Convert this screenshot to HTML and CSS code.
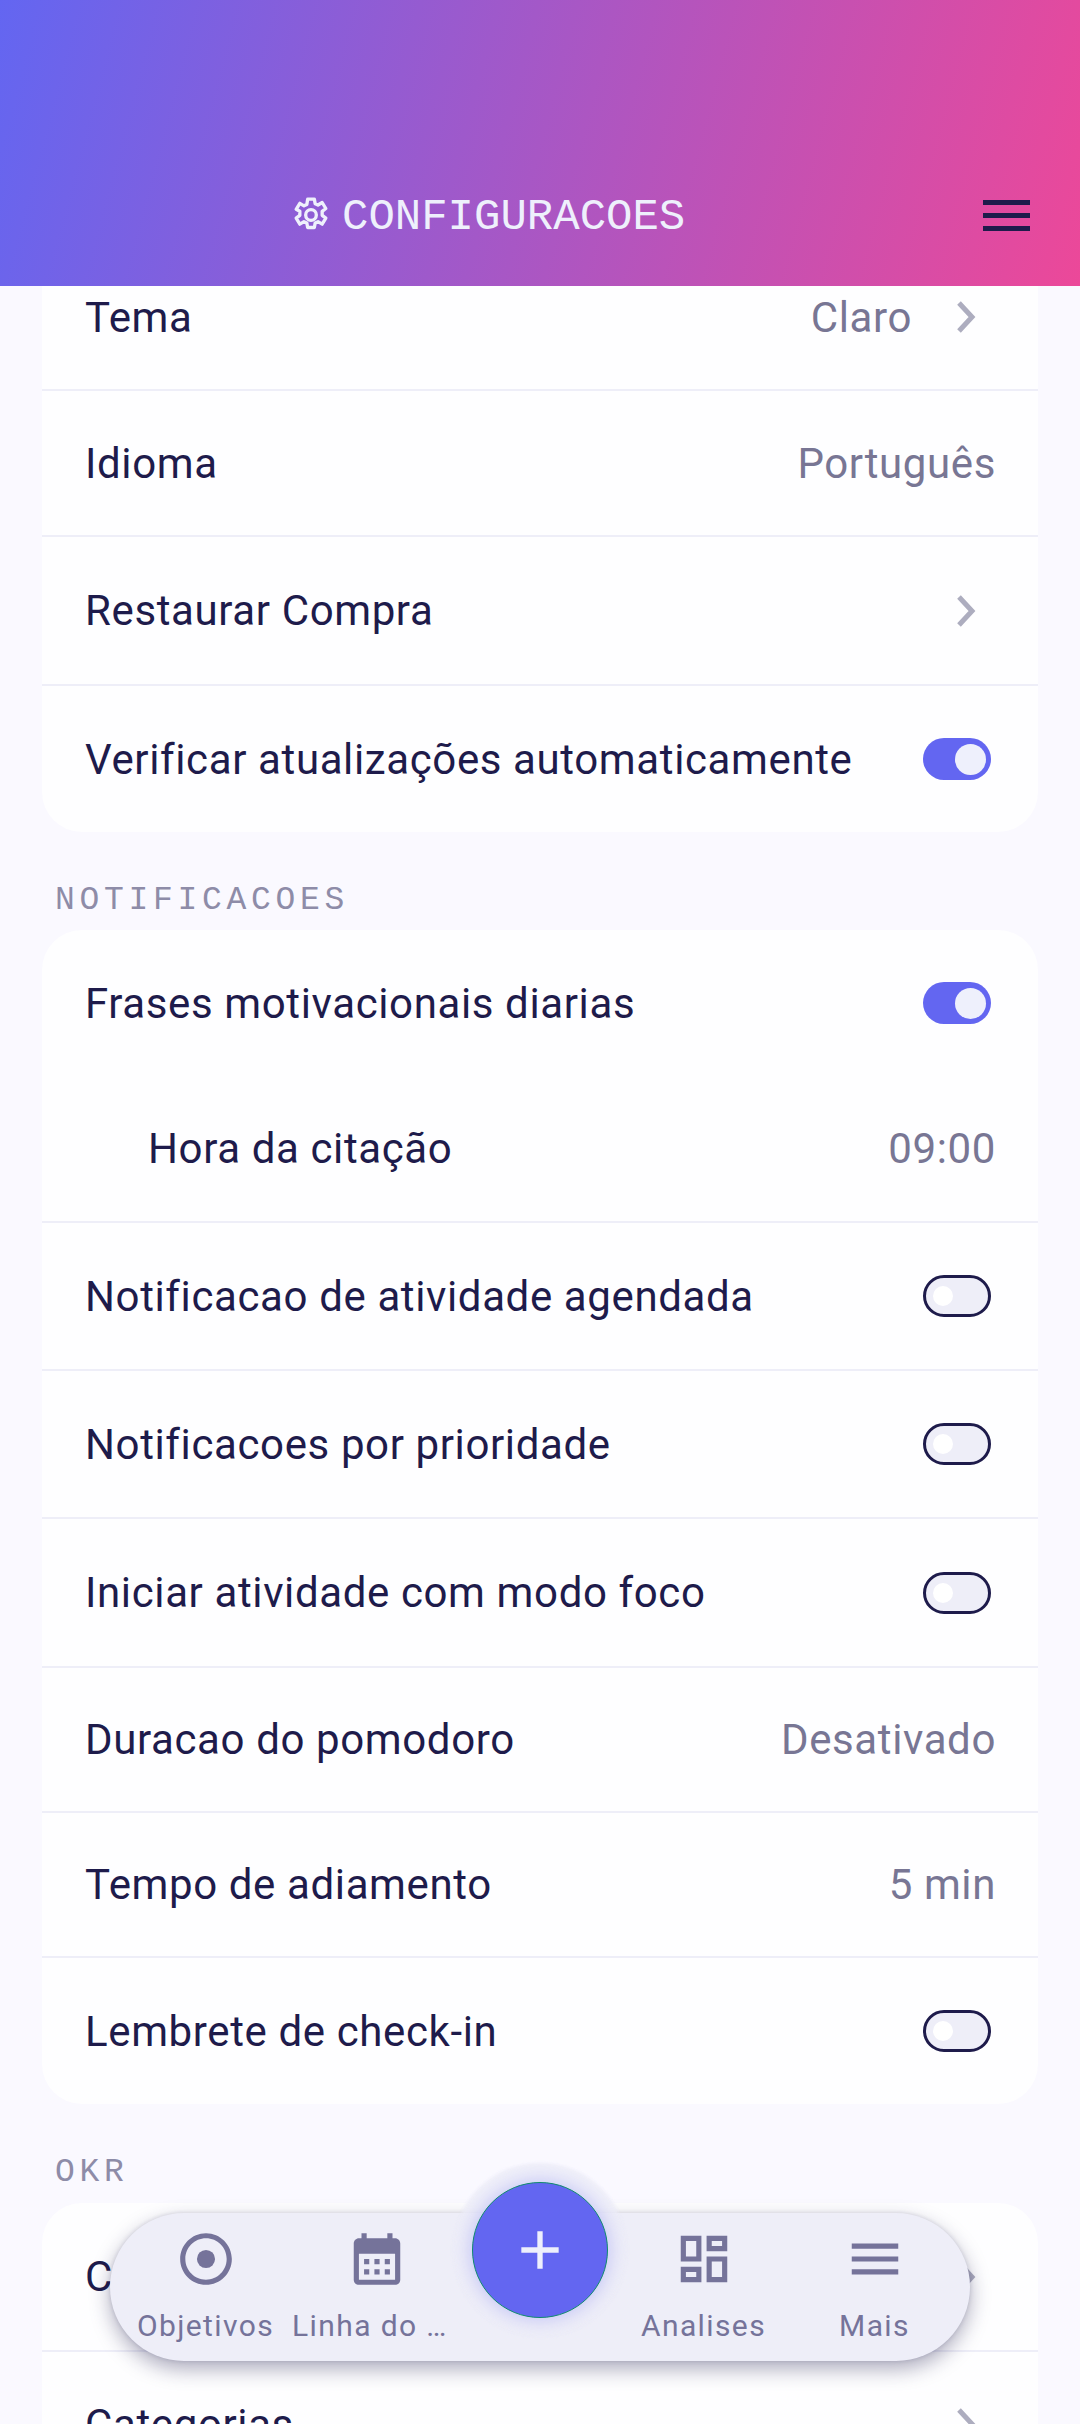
FILE: index.html
```html
<!DOCTYPE html>
<html lang="pt">
<head>
<meta charset="utf-8">
<title>Configuracoes</title>
<link rel="stylesheet" href="styles.css">
</head>
<body>
<div class="app">
  <header class="header">
    <div class="title">
      <svg class="gear" viewBox="0 0 24 24"><path d="M10 2.500h4l.5 2.700 1.700.8 2.500-1.500 2.200 3.600-2.200 1.700v2.400l2.200 1.700-2.200 3.600-2.500-1.500-1.700.8-.5 2.700h-4l-.5-2.700-1.700-.8-2.500 1.500-2.200-3.600 2.200-1.700v-2.400L3.100 8.600l2.200-3.600 2.500 1.500 1.700-.8z"/><circle cx="12" cy="12" r="3.200"/></svg>
      <span>CONFIGURACOES</span>
    </div>
    <div class="burger"><i></i><i></i><i></i></div>
  </header>

  <main class="scroller">
    <div class="content">
      <section class="card">
        <div class="row h146 line"><span>Tema</span><div class="end"><span class="value">Claro</span><svg class="chev" viewBox="0 0 20 32"><path d="M3 2l13 14L3 30"/></svg></div></div>
        <div class="row h146 line"><span>Idioma</span><span class="value">Português</span></div>
        <div class="row h149 line"><span>Restaurar Compra</span><div class="end"><svg class="chev" viewBox="0 0 20 32"><path d="M3 2l13 14L3 30"/></svg></div></div>
        <div class="row h146"><span>Verificar atualizações automaticamente</span><div class="toggle on"><b></b></div></div>
      </section>

      <h2 class="label">NOTIFICACOES</h2>
      <section class="card">
        <div class="row h146"><span>Frases motivacionais diarias</span><div class="toggle on"><b></b></div></div>
        <div class="row h147 line indent"><span>Hora da citação</span><span class="value">09:00</span></div>
        <div class="row h148 line"><span>Notificacao de atividade agendada</span><div class="toggle"><b></b></div></div>
        <div class="row h148 line"><span>Notificacoes por prioridade</span><div class="toggle"><b></b></div></div>
        <div class="row h149 line"><span>Iniciar atividade com modo foco</span><div class="toggle"><b></b></div></div>
        <div class="row h145 line"><span>Duracao do pomodoro</span><span class="value">Desativado</span></div>
        <div class="row h145 line"><span>Tempo de adiamento</span><span class="value">5 min</span></div>
        <div class="row h146"><span>Lembrete de check-in</span><div class="toggle"><b></b></div></div>
      </section>

      <h2 class="label">OKR</h2>
      <section class="card">
        <div class="row h149 line"><span>Ciclos</span><div class="end"><svg class="chev" viewBox="0 0 20 32"><path d="M3 2l13 14L3 30"/></svg></div></div>
        <div class="row h146 line"><span>Categorias</span><div class="end"><svg class="chev" viewBox="0 0 20 32"><path d="M3 2l13 14L3 30"/></svg></div></div>
      </section>
    </div>
  </main>

  <nav class="nav">
    <a class="item">
      <svg viewBox="0 0 24 24"><path d="M12 2C6.480 2 2 6.480 2 12s4.480 10 10 10 10-4.480 10-10S17.520 2 12 2zm0 18c-4.420 0-8-3.580-8-8s3.580-8 8-8 8 3.580 8 8-3.580 8-8 8z"/><circle cx="12" cy="12" r="3.500"/></svg>
      <span>Objetivos</span>
    </a>
    <a class="item cut">
      <svg viewBox="0 0 24 24"><path d="M19 4h-1V2h-2v2H8V2H6v2H5c-1.100 0-2 .9-2 2v14c0 1.100.9 2 2 2h14c1.100 0 2-.9 2-2V6c0-1.100-.9-2-2-2zm0 16H5V10h14v10zM9 14H7v-2h2v2zm4 0h-2v-2h2v2zm4 0h-2v-2h2v2zm-8 4H7v-2h2v2zm4 0h-2v-2h2v2zm4 0h-2v-2h2v2z"/></svg>
      <span>Linha do …</span>
    </a>
    <div class="slot"></div>
    <a class="item">
      <svg viewBox="0 0 24 24"><path d="M19 5v2h-4V5h4M9 5v6H5V5h4m10 8v6h-4v-6h4M9 17v2H5v-2h4M21 3h-8v6h8V3zM11 3H3v10h8V3zm10 8h-8v10h8V11zm-10 4H3v6h8v-6z"/></svg>
      <span>Analises</span>
    </a>
    <a class="item">
      <svg viewBox="0 0 24 24"><path d="M3 18h18v-2H3v2zm0-5h18v-2H3v2zm0-7v2h18V6H3z"/></svg>
      <span>Mais</span>
    </a>
  </nav>
  <button class="fab" type="button"><svg viewBox="0 0 24 24"><path d="M19 13h-6v6h-2v-6H5v-2h6V5h2v6h6v2z"/></svg></button>
</div>
</body>
</html>
```
FILE: styles.css
```css
* { box-sizing: border-box; }
html, body { margin: 0; padding: 0; }
body { background: #faf9ff; font-family: Roboto, "Noto Sans", sans-serif; color: #1e1b4b; }

.app { position: relative; width: 1080px; height: 2424px; overflow: hidden; display: flex; flex-direction: column; background: #faf9ff; }

.header {
  flex: none; height: 286px; position: relative; z-index: 1;
  background: linear-gradient(104.8deg, #6366f1, #ec4899);
  display: flex; align-items: flex-end; justify-content: flex-start;
  padding: 0 0 46px 291px;
}
.title { display: flex; align-items: center; gap: 11px; color: #eef0fc; font-family: "Liberation Mono", monospace; font-size: 44px; line-height: 46px; }
.gear { width: 40px; height: 40px; margin-top: -4px; fill: none; stroke: #eef0fc; stroke-width: 2; stroke-linejoin: round; }
.burger { position: absolute; left: 983px; top: 200px; width: 47px; display: flex; flex-direction: column; gap: 8px; }
.burger i { display: block; height: 5px; background: #1e1b4b; }

.scroller { flex: 1; overflow: hidden; }
.content { margin-top: -41px; padding: 0 42px; }

.card { background: #fefeff; border-radius: 40px; overflow: hidden; }
.row { display: flex; align-items: center; justify-content: space-between; padding: 0 43px; font-size: 42px; letter-spacing: .62px; color: #1e1b4b; white-space: nowrap; }
.line { border-bottom: 2px solid #eeeef8; }
.indent { padding-left: 106px; }
.h145 { height: 145px; } .h146 { height: 146px; } .h147 { height: 147px; } .h148 { height: 148px; } .h149 { height: 149px; }

.value { color: #787694; margin-right: -1px; }
.end { display: flex; align-items: center; gap: 44px; }
.end .value { margin-right: 0; }
.chev { width: 20px; height: 32px; fill: none; stroke: #adadbf; stroke-width: 5; margin-right: 19px; }

.toggle { position: relative; width: 68px; height: 42px; margin-right: 4px; border-radius: 21px; background: #eeeef8; border: 3px solid #1e1b4b; }
.toggle b { position: absolute; left: 7px; top: 8px; width: 20px; height: 20px; border-radius: 50%; background: #fff; }
.toggle.on { background: #6366f1; border: 0; }
.toggle.on b { left: 32px; top: 6px; width: 31px; height: 31px; background: #eef0fc; }

.label { margin: 0; height: 98px; padding: 51px 0 0 13px; font-family: "Liberation Mono", monospace; font-weight: 400; font-size: 33px; line-height: 36px; letter-spacing: 4.7px; color: #8e8ca8; }
.card + .label + .card + .label { height: 99px; }

.nav {
  position: absolute; left: 110px; top: 2213px; width: 860px; height: 148px; padding: 0 10px;
  display: flex; background: #eeeef8; border-radius: 74px;
  box-shadow: 0 8px 20px rgba(30,27,75,.36), 0 0 4px rgba(30,27,75,.15);
}
.item { flex: none; width: 171px; display: flex; flex-direction: column; align-items: center; padding-top: 15px; color: #75739a; font-size: 30px; letter-spacing: 1.4px; line-height: 36px; white-space: nowrap; }
.item svg { width: 62px; height: 62px; fill: #75739a; margin-bottom: 18px; }
.item.cut span { align-self: flex-start; margin-left: 1px; }
.slot { flex: none; width: 156px; }

.fab {
  position: absolute; left: 472px; top: 2182px; width: 136px; height: 136px; padding: 0;
  border-radius: 50%; background: #6366f1; border: 1px solid #0f8a6d;
  box-shadow: 0 0 18px 2px rgba(99,102,241,.3), 0 0 3px 19px rgba(238,238,248,.8);
  display: flex; align-items: center; justify-content: center;
}
.fab svg { width: 64px; height: 64px; fill: #eef0fc; }
```
